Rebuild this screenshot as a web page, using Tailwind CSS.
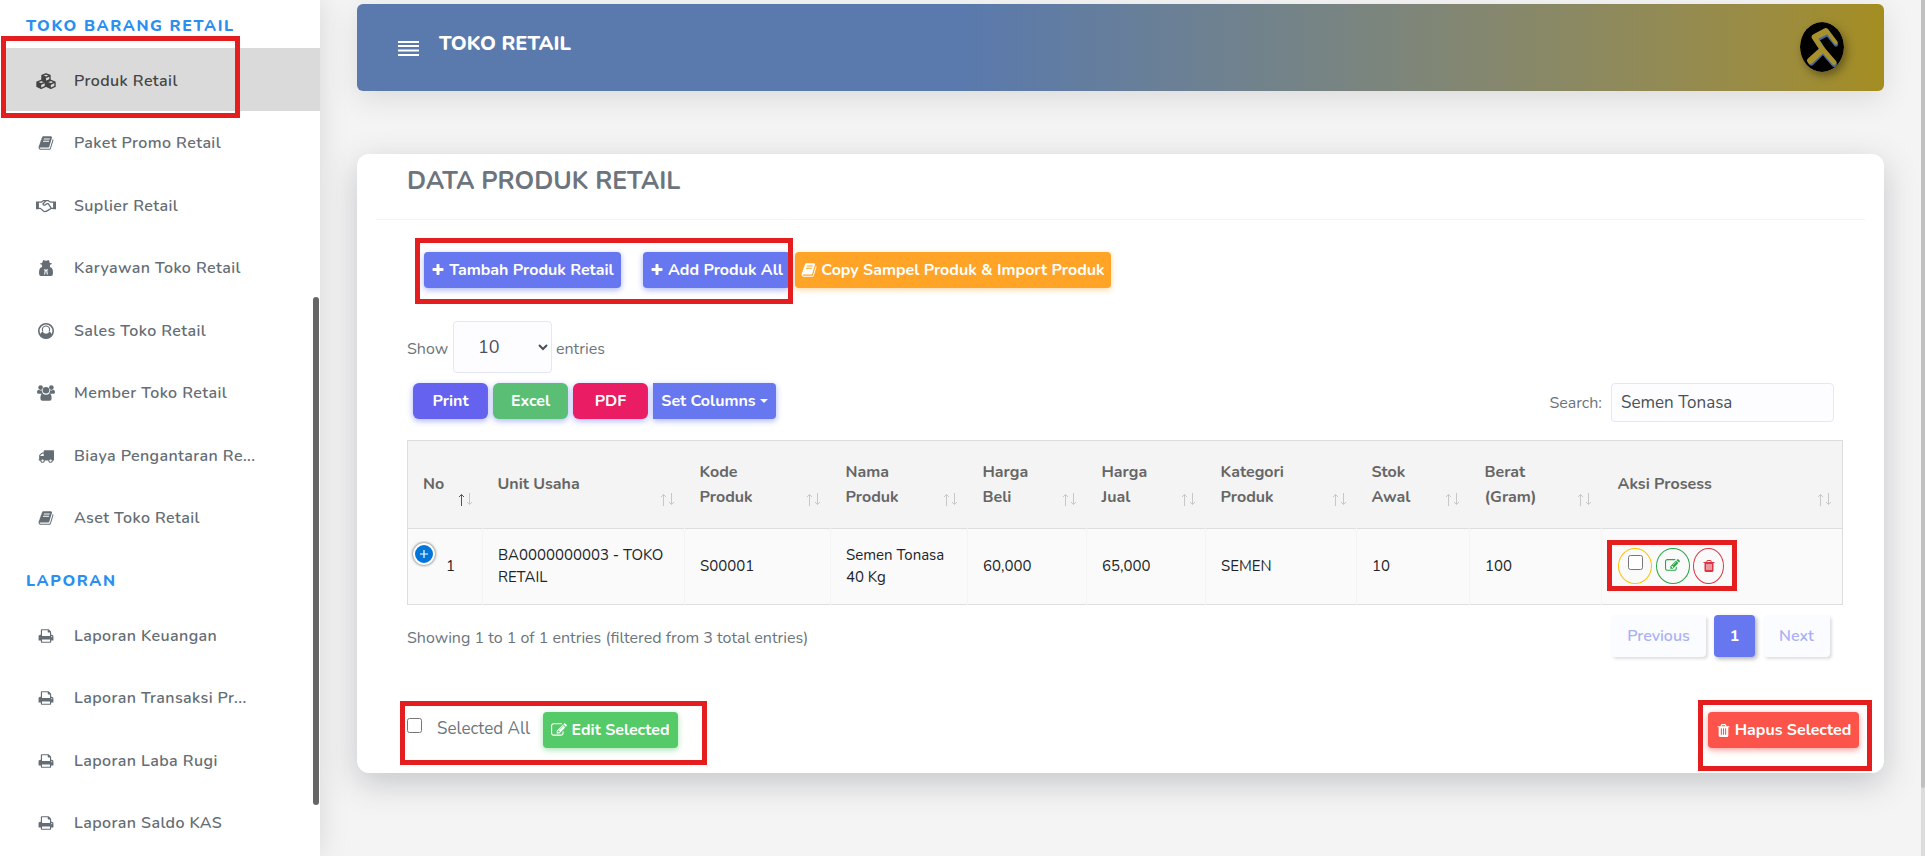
<!DOCTYPE html>
<html lang="id">
<head>
<meta charset="utf-8">
<meta name="viewport" content="width=device-width, initial-scale=1">
<title>Toko Retail - Data Produk Retail</title>
<script src="https://cdn.jsdelivr.net/npm/@tailwindcss/browser@4"></script>
</head>
<body class="flex h-screen overflow-hidden bg-[#f4f4f4] font-['Nunito','Lato',sans-serif] text-[16px] text-[#6c757d]">

<svg class="hidden" aria-hidden="true">
  <symbol id="plus" viewBox="0 0 1792 1792"><path d="M1600 736v192q0 40-28 68t-68 28h-416v416q0 40-28 68t-68 28h-192q-40 0-68-28t-28-68v-416h-416q-40 0-68-28t-28-68v-192q0-40 28-68t68-28h416v-416q0-40 28-68t68-28h192q40 0 68 28t28 68v416h416q40 0 68 28t28 68z"/></symbol>
  <symbol id="trash" viewBox="0 0 1792 1792"><path d="M704 1376v-704q0-14-9-23t-23-9h-64q-14 0-23 9t-9 23v704q0 14 9 23t23 9h64q14 0 23-9t9-23zm256 0v-704q0-14-9-23t-23-9h-64q-14 0-23 9t-9 23v704q0 14 9 23t23 9h64q14 0 23-9t9-23zm256 0v-704q0-14-9-23t-23-9h-64q-14 0-23 9t-9 23v704q0 14 9 23t23 9h64q14 0 23-9t9-23zm-544-992h448l-48-117q-7-9-17-11h-317q-10 2-17 11zm928 32v64q0 14-9 23t-23 9h-96v948q0 83-47 143.5t-113 60.5h-832q-66 0-113-58.5t-47-141.5v-952h-96q-14 0-23-9t-9-23v-64q0-14 9-23t23-9h309l70-167q15-37 54-63t79-26h320q40 0 79 26t54 63l70 167h309q14 0 23 9t9 23z"/></symbol>
  <symbol id="edit" viewBox="0 0 1792 1792"><path d="M888 1184l116-116-152-152-116 116v56h96v96h56zm440-720q-16-16-33 1l-350 350q-17 17-1 33t33-1l350-350q17-17 1-33zm80 594v190q0 119-84.5 203.5t-203.5 84.5h-832q-119 0-203.5-84.5t-84.5-203.5v-832q0-119 84.5-203.5t203.5-84.5h832q63 0 117 25 15 7 18 23 3 17-9 29l-49 49q-14 14-32 8-23-6-45-6h-832q-66 0-113 47t-47 113v832q0 66 47 113t113 47h832q66 0 113-47t47-113v-126q0-13 9-22l64-64q15-15 35-7t20 29zm-96-738l288 288-672 672h-288v-288zm444 132l-92 92-288-288 92-92q28-28 68-28t68 28l152 152q28 28 28 68t-28 68z"/></symbol>
  <symbol id="book" viewBox="0 0 1792 1792"><path d="M1703 478q40 57 18 129l-275 906q-19 64-76.5 107.5t-122.5 43.5h-923q-77 0-148.5-53.5t-99.5-131.5q-24-67-2-127 0-4 3-27t4-37q1-8-3-21.5t-3-19.5q2-11 8-21t16.5-23.5 16.5-23.5q23-38 45-91.5t30-91.5q3-10 .5-30t-.5-28q3-11 17-28t17-23q21-36 42-92t25-90q1-9-2.5-32t.5-28q4-13 22-30.5t22-22.5q19-26 42.5-84.5t27.5-96.5q1-8-3-25.5t-2-26.5q2-8 9-18t18-23 17-21q8-12 16.5-30.5t15-35 16-36 19.5-32 26.5-23.5 36-11.5 47.5 5.5l-1 3q38-9 51-9h761q74 0 114 56t18 130l-274 906q-36 119-71.5 153.5t-128.5 34.5h-869q-27 0-38 15-11 16-1 43 24 70 144 70h923q29 0 56-15.5t35-41.5l300-987q7-22 5-57 38 15 59 43zm-1064 2q-4 13 2 22.5t20 9.5h608q13 0 25.5-9.5t16.5-22.5l21-64q4-13-2-22.5t-20-9.5h-608q-13 0-25.5 9.5t-16.5 22.5zm-83 256q-4 13 2 22.5t20 9.5h608q13 0 25.5-9.5t16.5-22.5l21-64q4-13-2-22.5t-20-9.5h-608q-13 0-25.5 9.5t-16.5 22.5z"/></symbol>
  <symbol id="print" viewBox="0 0 1792 1792"><path d="M448 1536h896v-256h-896v256zm0-640h896v-384h-160q-40 0-68-28t-28-68v-160h-640v640zm1152 64q0-26-19-45t-45-19-45 19-19 45 19 45 45 19 45-19 19-45zm128 0v416q0 13-9.5 22.5t-22.5 9.5h-224v160q0 40-28 68t-68 28h-960q-40 0-68-28t-28-68v-160h-224q-13 0-22.5-9.5t-9.5-22.5v-416q0-79 56.5-135.5t135.5-56.5h64v-544q0-40 28-68t68-28h672q40 0 88 20t76 48l152 152q28 28 48 76t20 88v256h64q79 0 135.5 56.5t56.5 135.5z"/></symbol>
  <symbol id="truck" viewBox="0 0 1792 1792"><path d="M640 1408q0-52-38-90t-90-38-90 38-38 90 38 90 90 38 90-38 38-90zm-384-512h384v-256h-158q-13 0-22 9l-195 195q-9 9-9 22v30zm1280 512q0-52-38-90t-90-38-90 38-38 90 38 90 90 38 90-38 38-90zm256-1088v1024q0 15-4 26.5t-13.5 18.5-16.5 11.5-23.5 6-22.5 2-25.5 0-22.5-.5q0 106-75 181t-181 75-181-75-75-181h-384q0 106-75 181t-181 75-181-75-75-181h-64q-3 0-22.5.5t-25.5 0-22.5-2-23.5-6-16.5-11.5-13.5-18.5-4-26.5q0-26 19-45t45-19v-320q0-8-.5-35t0-38 2.5-34.5 6.5-37 14-30.5 22.5-30l198-198q19-19 50.5-32t58.5-13h160v-192q0-26 19-45t45-19h1024q26 0 45 19t19 45z"/></symbol>
  <symbol id="cubes" viewBox="0 0 20 16">
    <g fill="none" stroke="currentColor" stroke-width="1.4" stroke-linejoin="round">
      <path d="M10 .8 14 2.5v4.2L10 8.5 6 6.700V2.500zM6 2.500l4 1.800 4-1.800M5.200 7.300l4.200 1.800v4.300l-4.200 1.900L1 13.400V9.100zM1 9.100l4.200 1.900 4.200-1.900M14.800 7.300 19 9.100v4.300l-4.200 1.900-4.200-1.900V9.100zM10.600 9.100l4.200 1.900L19 9.100"/>
    </g>
    <path d="M10 4.300 6 2.500v4.200l4 1.800zM5.200 11 1 9.100v4.300l4.200 1.900zM14.800 11l-4.200-1.900v4.300l4.200 1.900z"/>
  </symbol>
  <symbol id="handshake" viewBox="0 0 22 14">
    <path d="M0 2h3.200v8.500H0zM18.800 2H22v8.500h-3.200z"/>
    <path fill="none" stroke="currentColor" stroke-width="1.4" stroke-linejoin="round" stroke-linecap="round" d="M3.200 2.800h2.600L8 1.200h5.600l2.600 1.600h2.600M3.200 9.600h1.600l3.400 3q1.400 1 2.400.2 1.400.2 2-1 1.400.1 1.900-1.200 1.500.2 1.700-1h2.600M10.600 1.600 7.600 4.800q.8 2 2.800.8l1.600-1.200h1.400l3.200 4.600"/>
  </symbol>
  <symbol id="secret" viewBox="0 0 14 16">
    <path fill-rule="evenodd" d="M4 .3Q5 0 6 .5q1 .4 2 0 1-.5 2-.2L10.800 3q2.200.3 2.200.8 0 .6-2 .9.300 1.200-.2 2.300 2.900.6 3.100 4.300.2 2.400-.1 3.200-.4 1.500-1.900 1.500H2.100Q.6 16 .2 14.500q-.3-.8-.1-3.200Q.3 7.600 3.200 7 2.700 5.900 3 4.700q-2-.3-2-.9 0-.5 2.200-.8zM4.800 9l.9 1.800-.6 3.800h1l.6-3.400.3-.6.3.6.6 3.400h1l-.6-3.800.9-1.800-2.200.800z"/>
  </symbol>
  <symbol id="user" viewBox="0 0 16 16">
    <circle cx="8" cy="8" r="7.200" fill="none" stroke="currentColor" stroke-width="1.600"/>
    <path d="M2 12q.6-2.800 2.600-3.200Q6 10.700 8 10.700t3.400-1.900q2 .4 2.600 3.200-2 3.600-6 3.600T2 12zM4.600 8.800Q2.800 6 4.900 3.700 8 1.200 11.100 3.700q2.100 2.300.3 5.100l-.8-.4q1.300-2.400-.3-4.100Q8 2.600 5.700 4.300q-1.600 1.700-.3 4.100z"/>
  </symbol>
  <symbol id="users" viewBox="0 0 18 16">
    <circle cx="3.600" cy="2.600" r="2.300"/><circle cx="14.400" cy="2.600" r="2.300"/><circle cx="9" cy="5.200" r="3.300"/>
    <path d="M1.500 4.800q2 1.200 3.600.5-.5 2 1 3.400H1.600Q0 8.700 0 7.200q0-2 1.500-2.400zM16.500 4.800q-2 1.200-3.600.5.500 2-1 3.400h4.500q1.600 0 1.600-1.500 0-2-1.500-2.400zM5.400 8.600q3.600 2.400 7.200 0 2 .5 2 4.800 0 2.400-2 2.400H5.400q-2 0-2-2.400 0-4.300 2-4.800z"/>
  </symbol>
  <symbol id="sort" viewBox="0 0 16 13">
    <path fill="none" stroke="currentColor" d="M4.500 13V1.500M2 4l2.500-2.500L7 4"/>
    <path fill="none" stroke="#c8c8c8" d="M12.500 0v11.500M10 9l2.500 2.500L15 9"/>
  </symbol>
</svg>

<!-- Sidebar -->
<aside class="relative z-10 w-80 shrink-0 bg-white font-semibold tracking-wide shadow-[0_0_28px_rgba(0,0,0,0.12)]">
  <h2 class="flex h-12 items-center pt-1 pl-[26px] text-[16px] font-extrabold tracking-widest text-[#2b8ff0]">TOKO BARANG RETAIL</h2>
  <nav class="text-[#656d74]">
    <ul>
      <li class="relative h-[63px] even:h-[62px]">
        <a href="#" aria-current="page" class="ml-1.5 flex h-full items-center gap-[18px] bg-[#dadada] pt-0.5 pl-[30px] text-[#444]"><svg class="h-4 w-5 fill-current"><use href="#cubes"/></svg>Produk Retail</a>
        <span class="pointer-events-none absolute -top-3 left-px h-[82px] w-[239px] border-5 border-[#e41e1f]"></span>
      </li>
      <li class="h-[63px] even:h-[62px]"><a href="#" class="flex h-full items-center gap-[18px] pt-0.5 pl-9"><svg class="h-4 w-5 fill-current"><use href="#book"/></svg>Paket Promo Retail</a></li>
      <li class="h-[63px] even:h-[62px]"><a href="#" class="flex h-full items-center gap-[18px] pt-0.5 pl-9"><svg class="h-4 w-5 fill-current"><use href="#handshake"/></svg>Suplier Retail</a></li>
      <li class="h-[63px] even:h-[62px]"><a href="#" class="flex h-full items-center gap-[18px] pt-0.5 pl-9"><svg class="h-4 w-5 fill-current"><use href="#secret"/></svg>Karyawan Toko Retail</a></li>
      <li class="h-[63px] even:h-[62px]"><a href="#" class="flex h-full items-center gap-[18px] pt-0.5 pl-9"><svg class="h-4 w-5 fill-current"><use href="#user"/></svg>Sales Toko Retail</a></li>
      <li class="h-[63px] even:h-[62px]"><a href="#" class="flex h-full items-center gap-[18px] pt-0.5 pl-9"><svg class="h-4 w-5 fill-current"><use href="#users"/></svg>Member Toko Retail</a></li>
      <li class="h-[63px] even:h-[62px]"><a href="#" class="flex h-full items-center gap-[18px] pt-0.5 pl-9"><svg class="h-4 w-5 fill-current"><use href="#truck"/></svg>Biaya Pengantaran Re...</a></li>
      <li class="h-[63px] even:h-[62px]"><a href="#" class="flex h-full items-center gap-[18px] pt-0.5 pl-9"><svg class="h-4 w-5 fill-current"><use href="#book"/></svg>Aset Toko Retail</a></li>
    </ul>
    <h2 class="flex h-14 items-center pt-[9px] pl-[26px] text-[16px] font-extrabold tracking-widest text-[#2b8ff0]">LAPORAN</h2>
    <ul>
      <li class="h-[63px] even:h-[62px]"><a href="#" class="flex h-full items-center gap-[18px] pl-9"><svg class="h-4 w-5 fill-current"><use href="#print"/></svg>Laporan Keuangan</a></li>
      <li class="h-[63px] even:h-[62px]"><a href="#" class="flex h-full items-center gap-[18px] pl-9"><svg class="h-4 w-5 fill-current"><use href="#print"/></svg>Laporan Transaksi Pr...</a></li>
      <li class="h-[63px] even:h-[62px]"><a href="#" class="flex h-full items-center gap-[18px] pl-9"><svg class="h-4 w-5 fill-current"><use href="#print"/></svg>Laporan Laba Rugi</a></li>
      <li class="h-[63px] even:h-[62px]"><a href="#" class="flex h-full items-center gap-[18px] pl-9"><svg class="h-4 w-5 fill-current"><use href="#print"/></svg>Laporan Saldo KAS</a></li>
    </ul>
  </nav>
  <span class="absolute top-[297px] right-px h-[508px] w-1.5 rounded-full bg-[#666]"></span>
</aside>

<main class="min-w-0 flex-1 px-[37px] pt-1">
  <header class="flex h-[87px] items-center rounded-md bg-linear-to-r from-[#5a79ac] from-40% to-[#a48d1e] pr-10 pl-[41px] shadow-[0_8px_30px_rgba(0,0,0,0.10)]">
    <button type="button" aria-label="Menu" class="mt-0.5"><svg class="block h-[15px] w-[21px]" viewBox="0 0 21 15" fill="none" stroke="#fff" stroke-width="2"><path d="M0 1h21M0 5h21M0 9.500h21M0 14h21"/></svg></button>
    <h1 class="mb-2 ml-5 text-[20px] font-extrabold text-white">TOKO RETAIL</h1>
    <svg class="mb-0.5 ml-auto h-[50px] w-11 rounded-[50%] shadow-[3px_4px_8px_rgba(0,0,0,0.35)]" viewBox="0 0 132 150" role="img" aria-label="Logo">
      <ellipse cx="66" cy="75" rx="66" ry="75"/>
      <g fill="none" stroke="#47689c" stroke-linejoin="round" stroke-linecap="round">
        <path stroke-width="13" d="M108 67 84 37"/>
        <path stroke-width="17" d="M82 34 48 52 70 86 34 122M70 88 102 126"/>
      </g>
      <g fill="none" stroke="#a8912c" stroke-linejoin="round" stroke-linecap="round">
        <path stroke-width="12" d="M107 61 82 28"/>
        <path stroke-width="19" d="M77 28 45 45"/>
        <path stroke-width="15" d="M43 46 66 80 102 121"/>
        <path stroke-width="19" d="M66 84 31 116"/>
      </g>
    </svg>
  </header>

  <section class="mt-[63px] h-[619px] rounded-xl bg-white shadow-[0_10px_32px_rgba(60,70,80,0.26)]">
    <h2 class="mx-[19px] h-[66px] border-b border-[#f3f3f3] pt-[9px] pl-[31px] text-[25px] leading-9 font-bold">DATA PRODUK RETAIL</h2>

    <div class="flex pt-8 pl-[67px] text-[16px] font-bold text-white">
      <div class="relative flex">
        <button type="button" class="flex h-9 w-[197px] items-center justify-center gap-1 rounded bg-[#6777ef] shadow-[0_2px_6px_#acb5f6]"><svg class="size-[14px] fill-current"><use href="#plus"/></svg>Tambah Produk Retail</button>
        <button type="button" class="ml-[22px] flex h-9 w-[147px] items-center justify-center gap-1 rounded bg-[#6777ef] shadow-[0_2px_6px_#acb5f6]"><svg class="size-[14px] fill-current"><use href="#plus"/></svg>Add Produk All</button>
        <span class="pointer-events-none absolute -top-3.5 -right-[3px] -bottom-4 -left-[9px] border-5 border-[#e41e1f]"></span>
      </div>
      <button type="button" class="ml-[5px] flex h-9 w-[316px] items-center justify-center gap-1 rounded bg-[#ffa426] shadow-[0_2px_6px_#ffd9a4]"><svg class="size-[16px] fill-current"><use href="#book"/></svg>Copy Sampel Produk &amp; Import Produk</button>
    </div>

    <div class="mt-[33px] flex items-center gap-1 pl-[50px]">
      <label for="len" class="w-[42px] pt-[3px]">Show</label>
      <select id="len" class="h-[52px] w-[99px] rounded border border-[#e4e6fc] bg-[#fdfdff] pl-5 text-[18px] text-[#495057]"><option>10</option></select>
      <span class="pt-[3px]">entries</span>
    </div>

    <div class="mt-[10px] flex h-9 items-center pr-[50px] pl-14 text-[16px] font-bold text-white">
      <div class="flex gap-[5px]">
        <button type="button" class="h-9 w-[75px] rounded-md bg-[#6562ef] shadow-[0_2px_6px_#acb5f6]">Print</button>
        <button type="button" class="h-9 w-[75px] rounded-md bg-[#5abf74] shadow-[0_2px_6px_#acb5f6]">Excel</button>
        <button type="button" class="h-9 w-[75px] rounded-md bg-[#ea1c64] shadow-[0_2px_6px_#acb5f6]">PDF</button>
        <button type="button" class="flex h-9 w-[123px] items-center justify-center gap-1 rounded-r bg-[#6777ef] shadow-[0_2px_6px_#acb5f6]">Set Columns<svg class="h-1 w-2 fill-current" viewBox="0 0 8 4"><path d="M0 0h8L4 4z"/></svg></button>
      </div>
      <label for="q" class="mt-[3px] mr-[9px] ml-auto font-normal text-[#6c757d]">Search:</label>
      <input id="q" type="text" value="Semen Tonasa" class="mt-[3px] h-[39px] w-[223px] rounded border border-[#e4e6fc] bg-[#fdfdff] px-[9px] text-[17px] font-normal text-[#495057]">
    </div>

    <div class="mt-[21px] pr-[41px] pl-[50px]">
      <table class="w-full table-fixed border-collapse border border-[#dcdddf] text-left">
        <colgroup><col class="w-[75px]"><col class="w-[202px]"><col class="w-[146px]"><col class="w-[137px]"><col class="w-[119px]"><col class="w-[119px]"><col class="w-[151px]"><col class="w-[113px]"><col class="w-[132px]"><col></colgroup>
        <thead class="bg-[#f4f4f4] text-[16px] leading-[25px] font-bold text-[#666]">
          <tr class="h-[88px] border-b border-[#dcdddf]">
            <th class="relative pl-[15px]">No<svg class="absolute right-2.5 bottom-[22px] h-[13px] w-4 text-[#555]"><use href="#sort"/></svg></th>
            <th class="relative pl-[15px]">Unit Usaha<svg class="absolute right-2.5 bottom-[22px] h-[13px] w-4 text-[#c8c8c8]"><use href="#sort"/></svg></th>
            <th class="relative pl-[15px]">Kode<br>Produk<svg class="absolute right-2.5 bottom-[22px] h-[13px] w-4 text-[#c8c8c8]"><use href="#sort"/></svg></th>
            <th class="relative pl-[15px]">Nama<br>Produk<svg class="absolute right-2.5 bottom-[22px] h-[13px] w-4 text-[#c8c8c8]"><use href="#sort"/></svg></th>
            <th class="relative pl-[15px]">Harga<br>Beli<svg class="absolute right-2.5 bottom-[22px] h-[13px] w-4 text-[#c8c8c8]"><use href="#sort"/></svg></th>
            <th class="relative pl-[15px]">Harga<br>Jual<svg class="absolute right-2.5 bottom-[22px] h-[13px] w-4 text-[#c8c8c8]"><use href="#sort"/></svg></th>
            <th class="relative pl-[15px]">Kategori<br>Produk<svg class="absolute right-2.5 bottom-[22px] h-[13px] w-4 text-[#c8c8c8]"><use href="#sort"/></svg></th>
            <th class="relative pl-[15px]">Stok<br>Awal<svg class="absolute right-2.5 bottom-[22px] h-[13px] w-4 text-[#c8c8c8]"><use href="#sort"/></svg></th>
            <th class="relative pl-[15px]">Berat<br>(Gram)<svg class="absolute right-2.5 bottom-[22px] h-[13px] w-4 text-[#c8c8c8]"><use href="#sort"/></svg></th>
            <th class="relative pl-4">Aksi Prosess<svg class="absolute right-2.5 bottom-[22px] h-[13px] w-4 text-[#c8c8c8]"><use href="#sort"/></svg></th>
          </tr>
        </thead>
        <tbody class="bg-[#fafafa] text-[15px] leading-[22px] text-[#212529]">
          <tr class="h-[76px]">
            <td class="relative border-r border-[#f4f4f4] pb-0.5 pl-[38px]"><button type="button" aria-label="Detail" class="absolute top-3.5 left-[5px] flex size-[22px] items-center justify-center rounded-full border-2 border-white bg-[#0275d8] shadow-[0_0_3px_#444]"><svg class="size-2" viewBox="0 0 8 8" stroke="#fff" stroke-width="1.200"><path d="M4 0v8M0 4h8"/></svg></button>1</td>
            <td class="border-r border-[#f4f4f4] pb-0.5 pl-[15px]">BA0000000003 - TOKO<br>RETAIL</td>
            <td class="border-r border-[#f4f4f4] pb-0.5 pl-[15px]">S00001</td>
            <td class="border-r border-[#f4f4f4] pb-0.5 pl-[15px]">Semen Tonasa<br>40 Kg</td>
            <td class="border-r border-[#f4f4f4] pb-0.5 pl-[15px]">60,000</td>
            <td class="border-r border-[#f4f4f4] pb-0.5 pl-[15px]">65,000</td>
            <td class="border-r border-[#f4f4f4] pb-0.5 pl-[15px]">SEMEN</td>
            <td class="border-r border-[#f4f4f4] pb-0.5 pl-[15px]">10</td>
            <td class="border-r border-[#f4f4f4] pb-0.5 pl-[15px]">100</td>
            <td class="pb-0.5 pl-4">
              <div class="relative flex w-[106px] items-center justify-between">
                <label class="flex h-9 w-[34px] items-center justify-center rounded-[50%] border border-[#ffc107] pb-1.5"><input type="checkbox" aria-label="Pilih produk" class="size-[15px]"></label>
                <button type="button" aria-label="Edit" class="flex h-9 w-[34px] items-center justify-center rounded-[50%] border border-[#28a745] text-[#28a745]"><svg class="size-[15px] fill-current"><use href="#edit"/></svg></button>
                <button type="button" aria-label="Hapus" class="flex h-9 w-[31px] items-center justify-center rounded-[50%] border border-[#dc3545] text-[#dc3545]"><svg class="size-[14px] fill-current"><use href="#trash"/></svg></button>
                <span class="pointer-events-none absolute -top-2 -right-[13px] -bottom-[7px] -left-[11px] border-5 border-[#e41e1f]"></span>
              </div>
            </td>
          </tr>
        </tbody>
      </table>
    </div>

    <div class="mt-[10px] flex h-[42px] items-center pr-[54px] pl-[50px]">
      <p class="pt-[3px]">Showing 1 to 1 of 1 entries (filtered from 3 total entries)</p>
      <nav class="ml-auto flex gap-2 font-semibold" aria-label="Halaman">
        <button type="button" class="h-[42px] w-[95px] rounded bg-[#fbfcff] text-[#a9b1f5] shadow-[2px_2px_3px_rgba(0,0,0,0.13)]">Previous</button>
        <button type="button" class="h-[42px] w-[41px] rounded bg-[#6777ef] font-bold text-white shadow-[2px_2px_4px_rgba(0,0,0,0.3)]">1</button>
        <button type="button" class="h-[42px] w-[67px] rounded bg-[#fbfcff] text-[#a9b1f5] shadow-[2px_2px_3px_rgba(0,0,0,0.13)]">Next</button>
      </nav>
    </div>

    <div class="mt-[55px] flex h-9 items-center justify-between pr-[25px] pl-[50px]">
      <div class="relative flex items-center">
        <input id="all" type="checkbox" class="mr-[15px] mb-[9px] size-[15px]">
        <label for="all" class="w-[106px] pb-[3px] text-[17px]">Selected All</label>
        <button type="button" class="flex h-9 w-[135px] items-center justify-center gap-1 rounded bg-[#54ca68] text-[16px] font-bold text-white shadow-[0_2px_6px_#a8e5b2]"><svg class="size-[16px] fill-current"><use href="#edit"/></svg>Edit Selected</button>
        <span class="pointer-events-none absolute -top-[11px] -right-[29px] -bottom-[17px] -left-[7px] border-5 border-[#e41e1f]"></span>
      </div>
      <div class="relative">
        <button type="button" class="flex h-9 w-[151px] items-center justify-center gap-1 rounded bg-[#fc544b] text-[16px] font-bold text-white shadow-[0_2px_6px_#fd9b96]"><svg class="size-[15px] fill-current"><use href="#trash"/></svg>Hapus Selected</button>
        <span class="pointer-events-none absolute -top-3 -right-[13px] -bottom-[23px] -left-[10px] border-5 border-[#e41e1f]"></span>
      </div>
    </div>
  </section>
</main>

<div class="w-1 shrink-0 bg-[#dcdcdc]" aria-hidden="true"><div class="h-[92%] rounded-b-sm bg-[#c0c0c0]"></div></div>
</body>
</html>
